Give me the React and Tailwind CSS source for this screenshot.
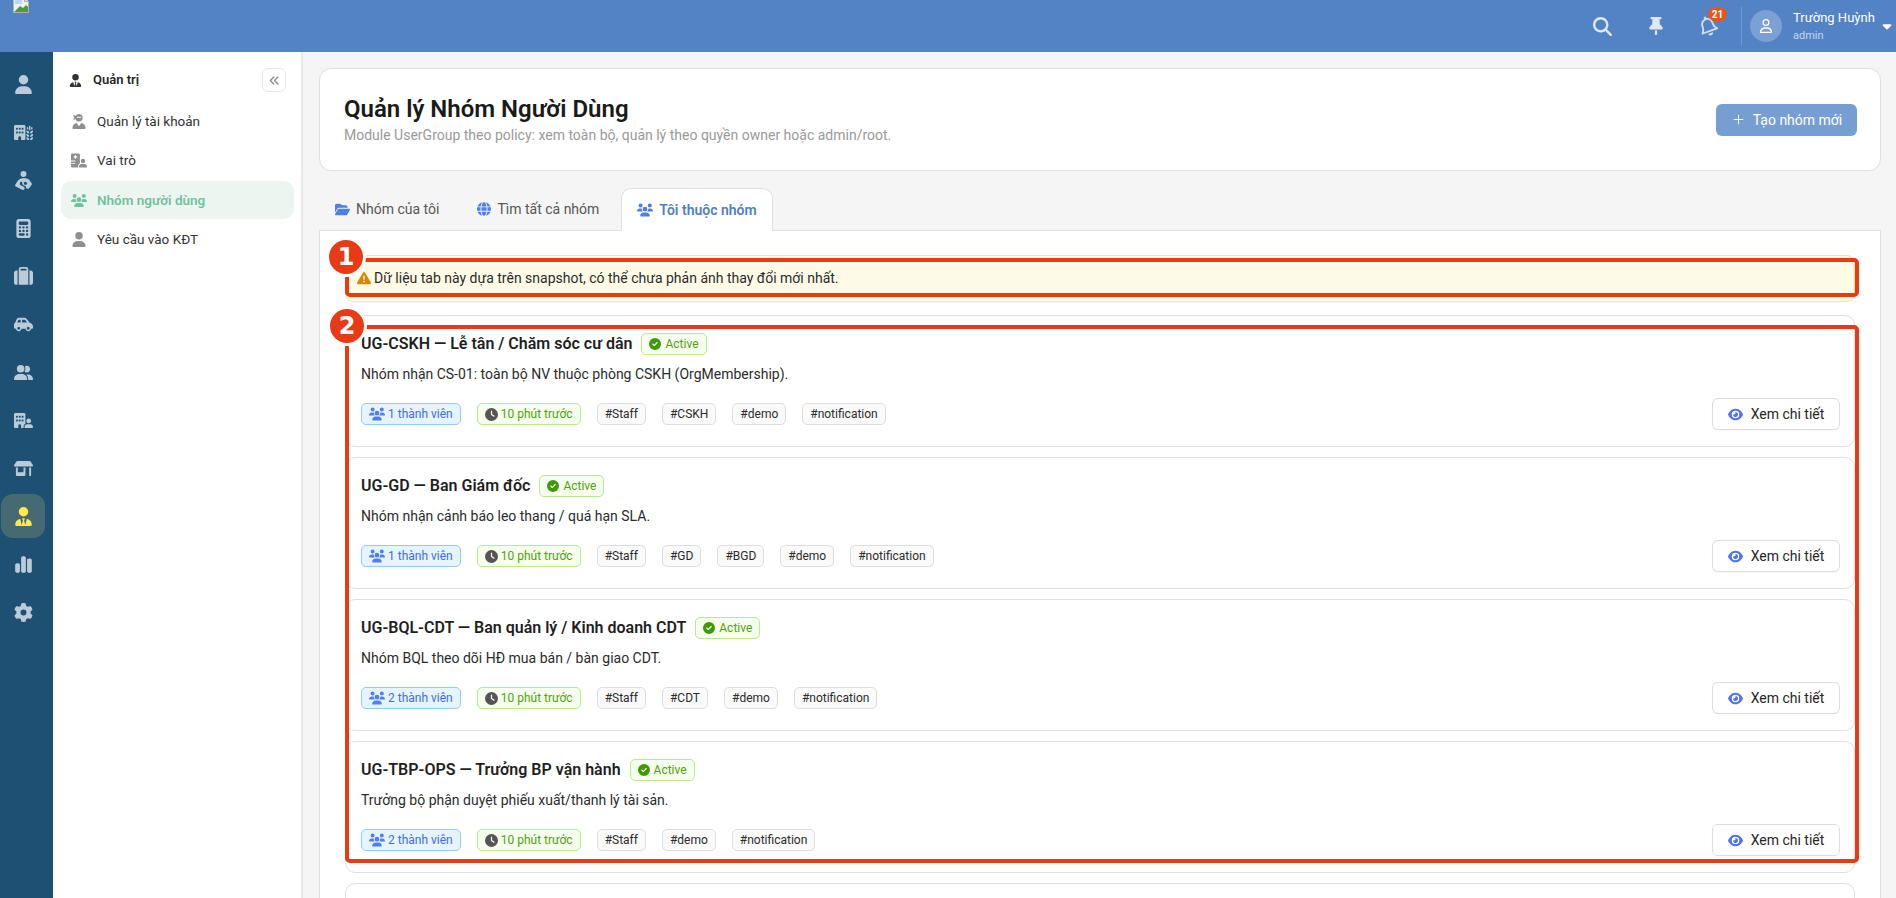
import {
  FaUser, FaRegUser, FaBuildingWheat, FaPersonBreastfeeding, FaCalculator, FaSuitcase, FaCarSide, FaUserGroup,
  FaBuildingUser, FaShop, FaUserTie, FaChartSimple, FaGear, FaUserNinja, FaHospitalUser, FaUsers, FaAnglesLeft,
  FaMagnifyingGlass, FaThumbtack, FaRegBell, FaCaretDown, FaFolderOpen, FaGlobe, FaTriangleExclamation,
  FaCircleCheck, FaClock, FaEye,
} from 'react-icons/fa6'
import { Plus } from 'lucide-react'

const RAIL = [
  { icon: FaUser }, { icon: FaBuildingWheat }, { icon: FaPersonBreastfeeding }, { icon: FaCalculator },
  { icon: FaSuitcase }, { icon: FaCarSide }, { icon: FaUserGroup }, { icon: FaBuildingUser }, { icon: FaShop },
  { icon: FaUserTie, active: true }, { icon: FaChartSimple }, { icon: FaGear },
]

const MENU = [
  { icon: FaUserNinja, label: 'Quản lý tài khoản' },
  { icon: FaHospitalUser, label: 'Vai trò' },
  { icon: FaUsers, label: 'Nhóm người dùng', active: true },
  { icon: FaUser, label: 'Yêu cầu vào KĐT' },
]

const GROUPS = [
  { title: 'UG-CSKH — Lễ tân / Chăm sóc cư dân', desc: 'Nhóm nhận CS-01: toàn bộ NV thuộc phòng CSKH (OrgMembership).', members: 1, tags: ['#Staff', '#CSKH', '#demo', '#notification'] },
  { title: 'UG-GD — Ban Giám đốc', desc: 'Nhóm nhận cảnh báo leo thang / quá hạn SLA.', members: 1, tags: ['#Staff', '#GD', '#BGD', '#demo', '#notification'] },
  { title: 'UG-BQL-CDT — Ban quản lý / Kinh doanh CDT', desc: 'Nhóm BQL theo dõi HĐ mua bán / bàn giao CDT.', members: 2, tags: ['#Staff', '#CDT', '#demo', '#notification'] },
  { title: 'UG-TBP-OPS — Trưởng BP vận hành', desc: 'Trưởng bộ phận duyệt phiếu xuất/thanh lý tài sản.', members: 2, tags: ['#Staff', '#demo', '#notification'] },
]

const BrokenImage = () => (
  <svg width="16" height="16" viewBox="0 0 16 16" className="ml-[13px] -mt-[3px] shrink-0">
    <path d="M0.5 0.5h11l4 4v11h-15z" fill="#eef2f5" stroke="#a8b2ba" />
    <path d="M11.5 0.5v4h4" fill="#d5dde3" stroke="#a8b2ba" />
    <path d="M1 15l6-6 3 2 3-3 2 2v5z" fill="#4f9a3c" />
    <path d="M2 3h7v4H2z" fill="#bcd8f0" />
  </svg>
)

const Tag = ({ className, children }) => (
  <span className={`flex items-center gap-[3px] h-[22px] px-[7px] rounded-[5px] border text-xs leading-none ${className}`}>
    {children}
  </span>
)

const GroupCard = ({ group }) => (
  <div className="flex flex-col h-[132px] pl-[15px] pr-[14px] pt-[17px] rounded-[10px] border border-[#e0e0e0] bg-white">
    <div className="flex items-center gap-[9px] h-[22px]">
      <span className="text-base font-semibold text-[#1f1f1f]">{group.title}</span>
      <span className="flex items-center gap-[4px] h-[22px] px-[7px] rounded-[5px] border border-[#b7eb8f] bg-[#f6ffed] text-xs text-[#52a010]">
        <FaCircleCheck className="text-[12px] text-[#3f9a0a]" />
        Active
      </span>
    </div>
    <p className="mt-[8px] text-sm leading-[22px] text-[#2b2b2b]">{group.desc}</p>
    <div className="flex items-center justify-between mt-[13px]">
      <div className="flex items-center gap-[16px]">
        <Tag className="border-[#91caff] bg-[#e6f4ff] text-[#3f6fd8]">
          <FaUsers className="text-[16px] text-[#4f7ff0]" />
          {group.members} thành viên
        </Tag>
        <Tag className="border-[#b7eb8f] bg-[#f6ffed] text-[#52a010]">
          <FaClock className="text-[13px] text-[#555]" />
          10 phút trước
        </Tag>
        {group.tags.map((tag) => (
          <Tag key={tag} className="border-[#dedede] bg-[#fafafa] text-[#2b2b2b]">{tag}</Tag>
        ))}
      </div>
      <button className="flex items-center justify-center gap-[8px] w-[128px] h-[32px] rounded-md border border-[#dcdcdc] bg-white text-sm text-[#262626] shadow-[0_1px_2px_rgba(0,0,0,0.03)]">
        <FaEye className="text-[15px] text-[#4f74f0]" />
        Xem chi tiết
      </button>
    </div>
  </div>
)

const Marker = ({ n, className }) => (
  <div className={`absolute flex items-center justify-center w-[34px] h-[34px] rounded-full bg-[#e83a15] ring-[3px] ring-white text-white text-[24px] font-bold font-['DejaVu_Sans',sans-serif] leading-none ${className}`}>
    {n}
  </div>
)

const App = () => {
  return (
    <div className="flex flex-col h-[898px] overflow-hidden bg-[#f5f5f5] font-['Roboto',sans-serif]">
      <header className="flex items-center h-[52px] shrink-0 bg-[#5483c5] overflow-hidden">
        <div className="self-start"><BrokenImage /></div>
        <div className="flex items-center ml-auto h-full">
          <FaMagnifyingGlass className="text-[19px] text-[#dfe8f5]" />
          <FaThumbtack className="ml-[35px] text-[18px] text-[#dfe8f5]" />
          <div className="relative ml-[33px]">
            <FaRegBell className="text-[20px] text-[#cfdcf0] -rotate-[20deg]" />
            <span className="absolute -top-[9px] left-[10px] flex items-center justify-center w-[19px] h-[14px] rounded-full bg-[#e8551f] text-[10px] font-bold text-white">21</span>
          </div>
          <div className="ml-[23px] w-px h-[38px] bg-[#7199d2]" />
          <div className="ml-[8px] flex items-center justify-center w-[32px] h-[32px] rounded-full bg-[#7aa0d5]">
            <FaRegUser className="text-[14px] text-white" />
          </div>
          <div className="ml-[11px] flex flex-col w-[87px]">
            <span className="text-[13px] leading-[16px] text-white">Trường Huỳnh</span>
            <span className="mt-[3px] text-[11px] leading-[14px] text-[#c6d6ee]">admin</span>
          </div>
          <FaCaretDown className="mr-[2px] text-[14px] text-white" />
        </div>
      </header>

      <div className="flex flex-1 min-h-0">
        <nav className="flex flex-col items-start gap-[4px] w-[53px] shrink-0 pt-[10px] pl-[1px] bg-[#1e5074]">
          {RAIL.map(({ icon: Icon, active }, i) => (
            <div key={i} className={`flex items-center justify-center w-[44px] h-[44px] rounded-xl ${active ? 'bg-[#466a72]' : ''}`}>
              <Icon className={`text-[19px] ${active ? 'text-[#ffe94d]' : 'text-[#bccbd8]'}`} />
            </div>
          ))}
        </nav>

        <aside className="w-[250px] shrink-0 pl-[8px] pr-[7px] pt-[16px] bg-white border-r-2 border-[#e9e9e9]">
          <div className="flex items-center h-[24px]">
            <FaUserTie className="ml-[8px] text-[13px] text-[#333]" />
            <span className="ml-[11px] text-[13px] font-semibold text-[#262626]">Quản trị</span>
            <button className="flex items-center justify-center ml-auto mr-[8px] w-[24px] h-[24px] rounded-md border border-[#e8e8e8] text-[#8c8c8c]">
              <FaAnglesLeft className="text-[11px]" />
            </button>
          </div>
          <div className="flex flex-col gap-[1.5px] mt-[10px]">
            {MENU.map(({ icon: Icon, label, active }) => (
              <div key={label} className={`flex items-center h-[38px] pl-[10px] rounded-[10px] ${active ? 'bg-[#edf5f1]' : ''}`}>
                <Icon className={`text-[15px] w-[16px] ${active ? 'text-[#70c29f]' : 'text-[#8f8f8f]'}`} />
                <span className={`ml-[10px] text-[13.5px] ${active ? 'font-semibold text-[#70c29f]' : 'text-[#333]'}`}>{label}</span>
              </div>
            ))}
          </div>
        </aside>

        <main className="flex-1 min-w-0 pl-[16px] pr-[15px] pt-[16px]">
          <section className="flex items-center justify-between h-[103px] pl-[24px] pr-[23px] rounded-xl border border-[#e0e0e0] bg-white">
            <div>
              <h1 className="text-2xl leading-[30px] font-semibold text-[#1a1a1a]">Quản lý Nhóm Người Dùng</h1>
              <p className="mt-[1px] text-sm leading-[20px] text-[#9a9a9a]">Module UserGroup theo policy: xem toàn bộ, quản lý theo quyền owner hoặc admin/root.</p>
            </div>
            <button className="flex items-center justify-center gap-[7px] w-[141px] h-[32px] rounded-md bg-[#769ed2] text-sm text-white">
              <Plus size={15} strokeWidth={1.5} />
              Tạo nhóm mới
            </button>
          </section>

          <div className="flex gap-[6px] mt-[17px] h-[42px] text-sm">
            <div className="flex items-center gap-[6px] px-[16px] text-[#555]">
              <FaFolderOpen className="text-[15px] text-[#4f7fe0]" />
              Nhóm của tôi
            </div>
            <div className="flex items-center gap-[6px] px-[16px] text-[#555]">
              <FaGlobe className="text-[14px] text-[#4f7fe0]" />
              Tìm tất cả nhóm
            </div>
            <div className="flex items-center gap-[6px] px-[15px] -mb-px rounded-t-[10px] border border-b-0 border-[#e0e0e0] bg-white font-semibold text-[#4f7fc6]">
              <FaUsers className="text-[16px] text-[#4f7fe0]" />
              Tôi thuộc nhóm
            </div>
          </div>

          <section className="h-[700px] pl-[25px] pr-[25px] pt-[24px] border-t border-x border-[#e0e0e0] bg-white">
            <div className="relative">
              <div className="flex items-center gap-[3px] h-[47px] pb-[1px] pl-[11px] rounded-lg border border-[#ffe58f] bg-[#fffbe6] text-sm text-[#2b2b2b]">
                <FaTriangleExclamation className="text-[14px] text-[#d48806]" />
                Dữ liệu tab này dựa trên snapshot, có thể chưa phản ánh thay đổi mới nhất.
              </div>
              <div className="absolute top-[3px] left-0 -right-[4px] h-[39px] rounded-[5px] border-[4px] border-[#e83a15]" />
              <Marker n="1" className="-top-[15px] -left-[16px]" />
            </div>

            <div className="mt-[13px] flex flex-col gap-[10px]">
              <div className="relative flex flex-col gap-[10px]">
                {GROUPS.map((group) => <GroupCard key={group.title} group={group} />)}
                <div className="absolute top-[10px] left-0 -right-[4px] h-[538px] rounded-[5px] border-[4px] border-[#e83a15]" />
                <Marker n="2" className="-top-[6px] -left-[15px]" />
              </div>
              <div className="h-[132px] rounded-[10px] border border-[#e0e0e0] bg-white" />
            </div>
          </section>
        </main>
      </div>
    </div>
  )
}

export default App
